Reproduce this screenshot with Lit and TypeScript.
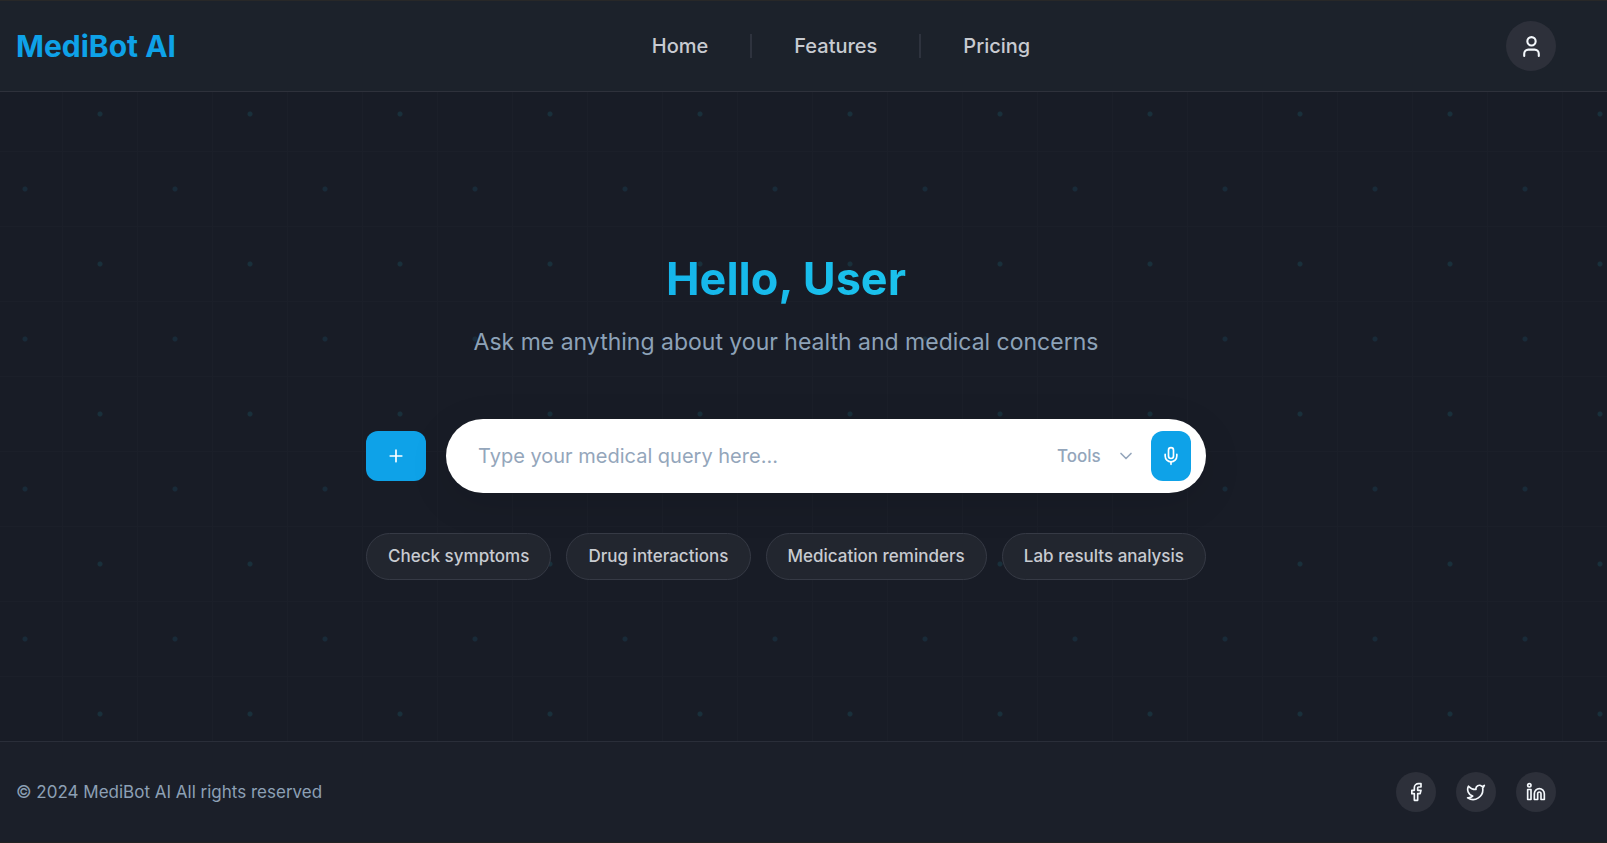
import { LitElement, html, css, svg } from "lit";
import { customElement, state } from "lit/decorators.js";

const glyphs = {
  user: svg`<path d="M19 21v-2a4 4 0 0 0-4-4H9a4 4 0 0 0-4 4v2"/><circle cx="12" cy="7" r="4"/>`,
  plus: svg`<path d="M5 12h14M12 5v14"/>`,
  chevron: svg`<path d="m6 9 6 6 6-6"/>`,
  mic: svg`<path d="M12 2a3 3 0 0 0-3 3v7a3 3 0 0 0 6 0V5a3 3 0 0 0-3-3Z"/><path d="M19 10v2a7 7 0 0 1-14 0v-2"/><path d="M12 19v3"/>`,
  facebook: svg`<path d="M18 2h-3a5 5 0 0 0-5 5v3H7v4h3v8h4v-8h3l1-4h-4V7a1 1 0 0 1 1-1h3z"/>`,
  twitter: svg`<path d="M22 4s-.7 2.100-2 3.400c1.600 10-9.400 17.300-18 11.600 2.200.1 4.400-.6 6-2C3 15.500.5 9.600 3 5c2.200 2.600 5.600 4.100 9 4-.9-4.200 4-6.600 7-3.800 1.100 0 3-1.200 3-1.200z"/>`,
  linkedin: svg`<path d="M16 8a6 6 0 0 1 6 6v7h-4v-7a2 2 0 0 0-2-2 2 2 0 0 0-2 2v7h-4v-7a6 6 0 0 1 6-6z"/><rect x="2" y="9" width="4" height="12"/><circle cx="4" cy="4" r="2"/>`,
};

type Glyph = keyof typeof glyphs;

const icon = (name: Glyph, size = 20) => html`
  <svg class="icon" width=${size} height=${size} viewBox="0 0 24 24" aria-hidden="true">${glyphs[name]}</svg>
`;

@customElement("app-root")
export class AppRoot extends LitElement {
  @state() private query = "";

  private pages = ["Home", "Features", "Pricing"];
  private suggestions = ["Check symptoms", "Drug interactions", "Medication reminders", "Lab results analysis"];
  private networks: { name: Glyph; label: string }[] = [
    { name: "facebook", label: "Facebook" },
    { name: "twitter", label: "Twitter" },
    { name: "linkedin", label: "LinkedIn" },
  ];

  static styles = css`
    :host {
      display: flex;
      flex-direction: column;
      box-sizing: border-box;
      min-height: 100vh;
      border-top: 1px solid #282828;
      border-bottom: 1px solid #222222;
      background: #181c26;
      color: #c8cbd1;
      font-family: Inter, "Liberation Sans", sans-serif;
      font-size: 20px;
    }
    *, *::before, *::after { box-sizing: border-box; }
    button, input, select { font: inherit; color: inherit; margin: 0; }
    button { cursor: pointer; }
    a { color: inherit; text-decoration: none; }
    .icon {
      display: block;
      flex: none;
      fill: none;
      stroke: currentColor;
      stroke-width: 2;
      stroke-linecap: round;
      stroke-linejoin: round;
    }
    .header, .footer {
      display: flex;
      align-items: center;
      justify-content: space-between;
      padding: 20px 51px 20px 16px;
    }
    .header {
      background: #1c222b;
      border-bottom: 1px solid #2e313b;
    }
    .logo { font-size: 30px; font-weight: 700; color: #0ea2e8; }
    .nav {
      display: flex;
      align-items: center;
      gap: 42px;
      font-weight: 500;
    }
    .divider { width: 2px; height: 24px; background: #2e333e; }
    .round {
      display: grid;
      place-items: center;
      width: 40px;
      height: 40px;
      padding: 0;
      border: 0;
      border-radius: 50%;
      background: #2d303a;
      color: #f4f8fc;
    }
    .profile { width: 50px; height: 50px; }
    .main {
      flex: 1;
      display: flex;
      flex-direction: column;
      align-items: center;
      justify-content: center;
      padding: 20px 51px 22px 16px;
      background-image:
        radial-gradient(circle, #19303b 2px, transparent 3px),
        radial-gradient(circle, #192b39 2px, transparent 3px),
        linear-gradient(90deg, #1b1f29 1px, transparent 1px),
        linear-gradient(#1b1f29 1px, transparent 1px);
      background-size: 150px 150px, 150px 150px, 75px 75px, 75px 75px;
      background-position: 25px -53px, -50px 22px, 62px 0, 0 59px;
    }
    .panel {
      display: flex;
      flex-direction: column;
      width: 100%;
      max-width: 840px;
      text-align: center;
    }
    .title {
      margin: 0 0 20px;
      font-size: 45px;
      line-height: 54px;
      font-weight: 700;
      background: linear-gradient(90deg, #0ea5e9, #22d3ee);
      -webkit-background-clip: text;
      background-clip: text;
      color: transparent;
    }
    .subtitle {
      margin: 0 0 60px;
      font-size: 23px;
      line-height: 33px;
      color: #8da2b8;
    }
    .composer {
      display: flex;
      align-items: center;
      gap: 20px;
      margin-bottom: 40px;
    }
    .action {
      display: grid;
      place-items: center;
      flex: none;
      height: 50px;
      padding: 0;
      border: 0;
      border-radius: 12px;
      background: #0ea2e8;
      color: #fff;
    }
    .add { width: 60px; }
    .mic { width: 40px; }
    .field {
      flex: 1;
      display: flex;
      align-items: center;
      min-width: 0;
      height: 74px;
      padding: 0 15px 0 32px;
      border-radius: 37px;
      background: #fff;
      box-shadow: 0 10px 40px rgba(0, 0, 0, 0.1);
    }
    .query {
      flex: 1;
      min-width: 0;
      padding: 0;
      border: 0;
      outline: 0;
      background: none;
      color: #1e293b;
    }
    .query::placeholder { color: #94a6bb; opacity: 1; }
    .tools {
      display: flex;
      align-items: center;
      gap: 15px;
      margin-right: 15px;
      color: #94a6bb;
      font-size: 17px;
      font-weight: 500;
    }
    .select {
      appearance: none;
      padding: 0;
      border: 0;
      outline: 0;
      background: none;
    }
    .chips {
      display: flex;
      flex-wrap: wrap;
      gap: 15px;
    }
    .chip {
      flex: 1 0 auto;
      height: 47px;
      padding: 0 18px;
      border: 1px solid #363a45;
      border-radius: 24px;
      background: #22262f;
      font-size: 17px;
      font-weight: 500;
      white-space: nowrap;
    }
    .footer {
      padding-top: 30px;
      padding-bottom: 30px;
      border-top: 1px solid #2a2e39;
      background: #1b1f29;
    }
    .rights { font-size: 17px; color: #8da0b5; }
    .social { display: flex; gap: 20px; }
  `;

  render() {
    return html`
      <header class="header">
        <a class="logo" href="#">MediBot AI</a>
        <nav class="nav" aria-label="Main">
          ${this.pages.map(
            (page, i) => html`${i ? html`<span class="divider"></span>` : ""}<a href="#${page.toLowerCase()}">${page}</a>`
          )}
        </nav>
        <button class="round profile" aria-label="Profile">${icon("user", 25)}</button>
      </header>
      <main class="main">
        <div class="panel">
          <h1 class="title">Hello, User</h1>
          <p class="subtitle">Ask me anything about your health and medical concerns</p>
          <div class="composer">
            <button class="action add" aria-label="Add">${icon("plus")}</button>
            <div class="field">
              <input
                class="query"
                type="text"
                aria-label="Medical query"
                placeholder="Type your medical query here..."
                .value=${this.query}
                @input=${(e: Event) => (this.query = (e.target as HTMLInputElement).value)}
              />
              <label class="tools">
                <select class="select" aria-label="Tools"><option>Tools</option></select>
                ${icon("chevron")}
              </label>
              <button class="action mic" aria-label="Voice input">${icon("mic")}</button>
            </div>
          </div>
          <div class="chips">
            ${this.suggestions.map(
              (text) => html`<button class="chip" @click=${() => (this.query = text)}>${text}</button>`
            )}
          </div>
        </div>
      </main>
      <footer class="footer">
        <span class="rights">© 2024 MediBot AI All rights reserved</span>
        <div class="social">
          ${this.networks.map((n) => html`<a class="round" href="#${n.name}" aria-label=${n.label}>${icon(n.name)}</a>`)}
        </div>
      </footer>
    `;
  }
}
